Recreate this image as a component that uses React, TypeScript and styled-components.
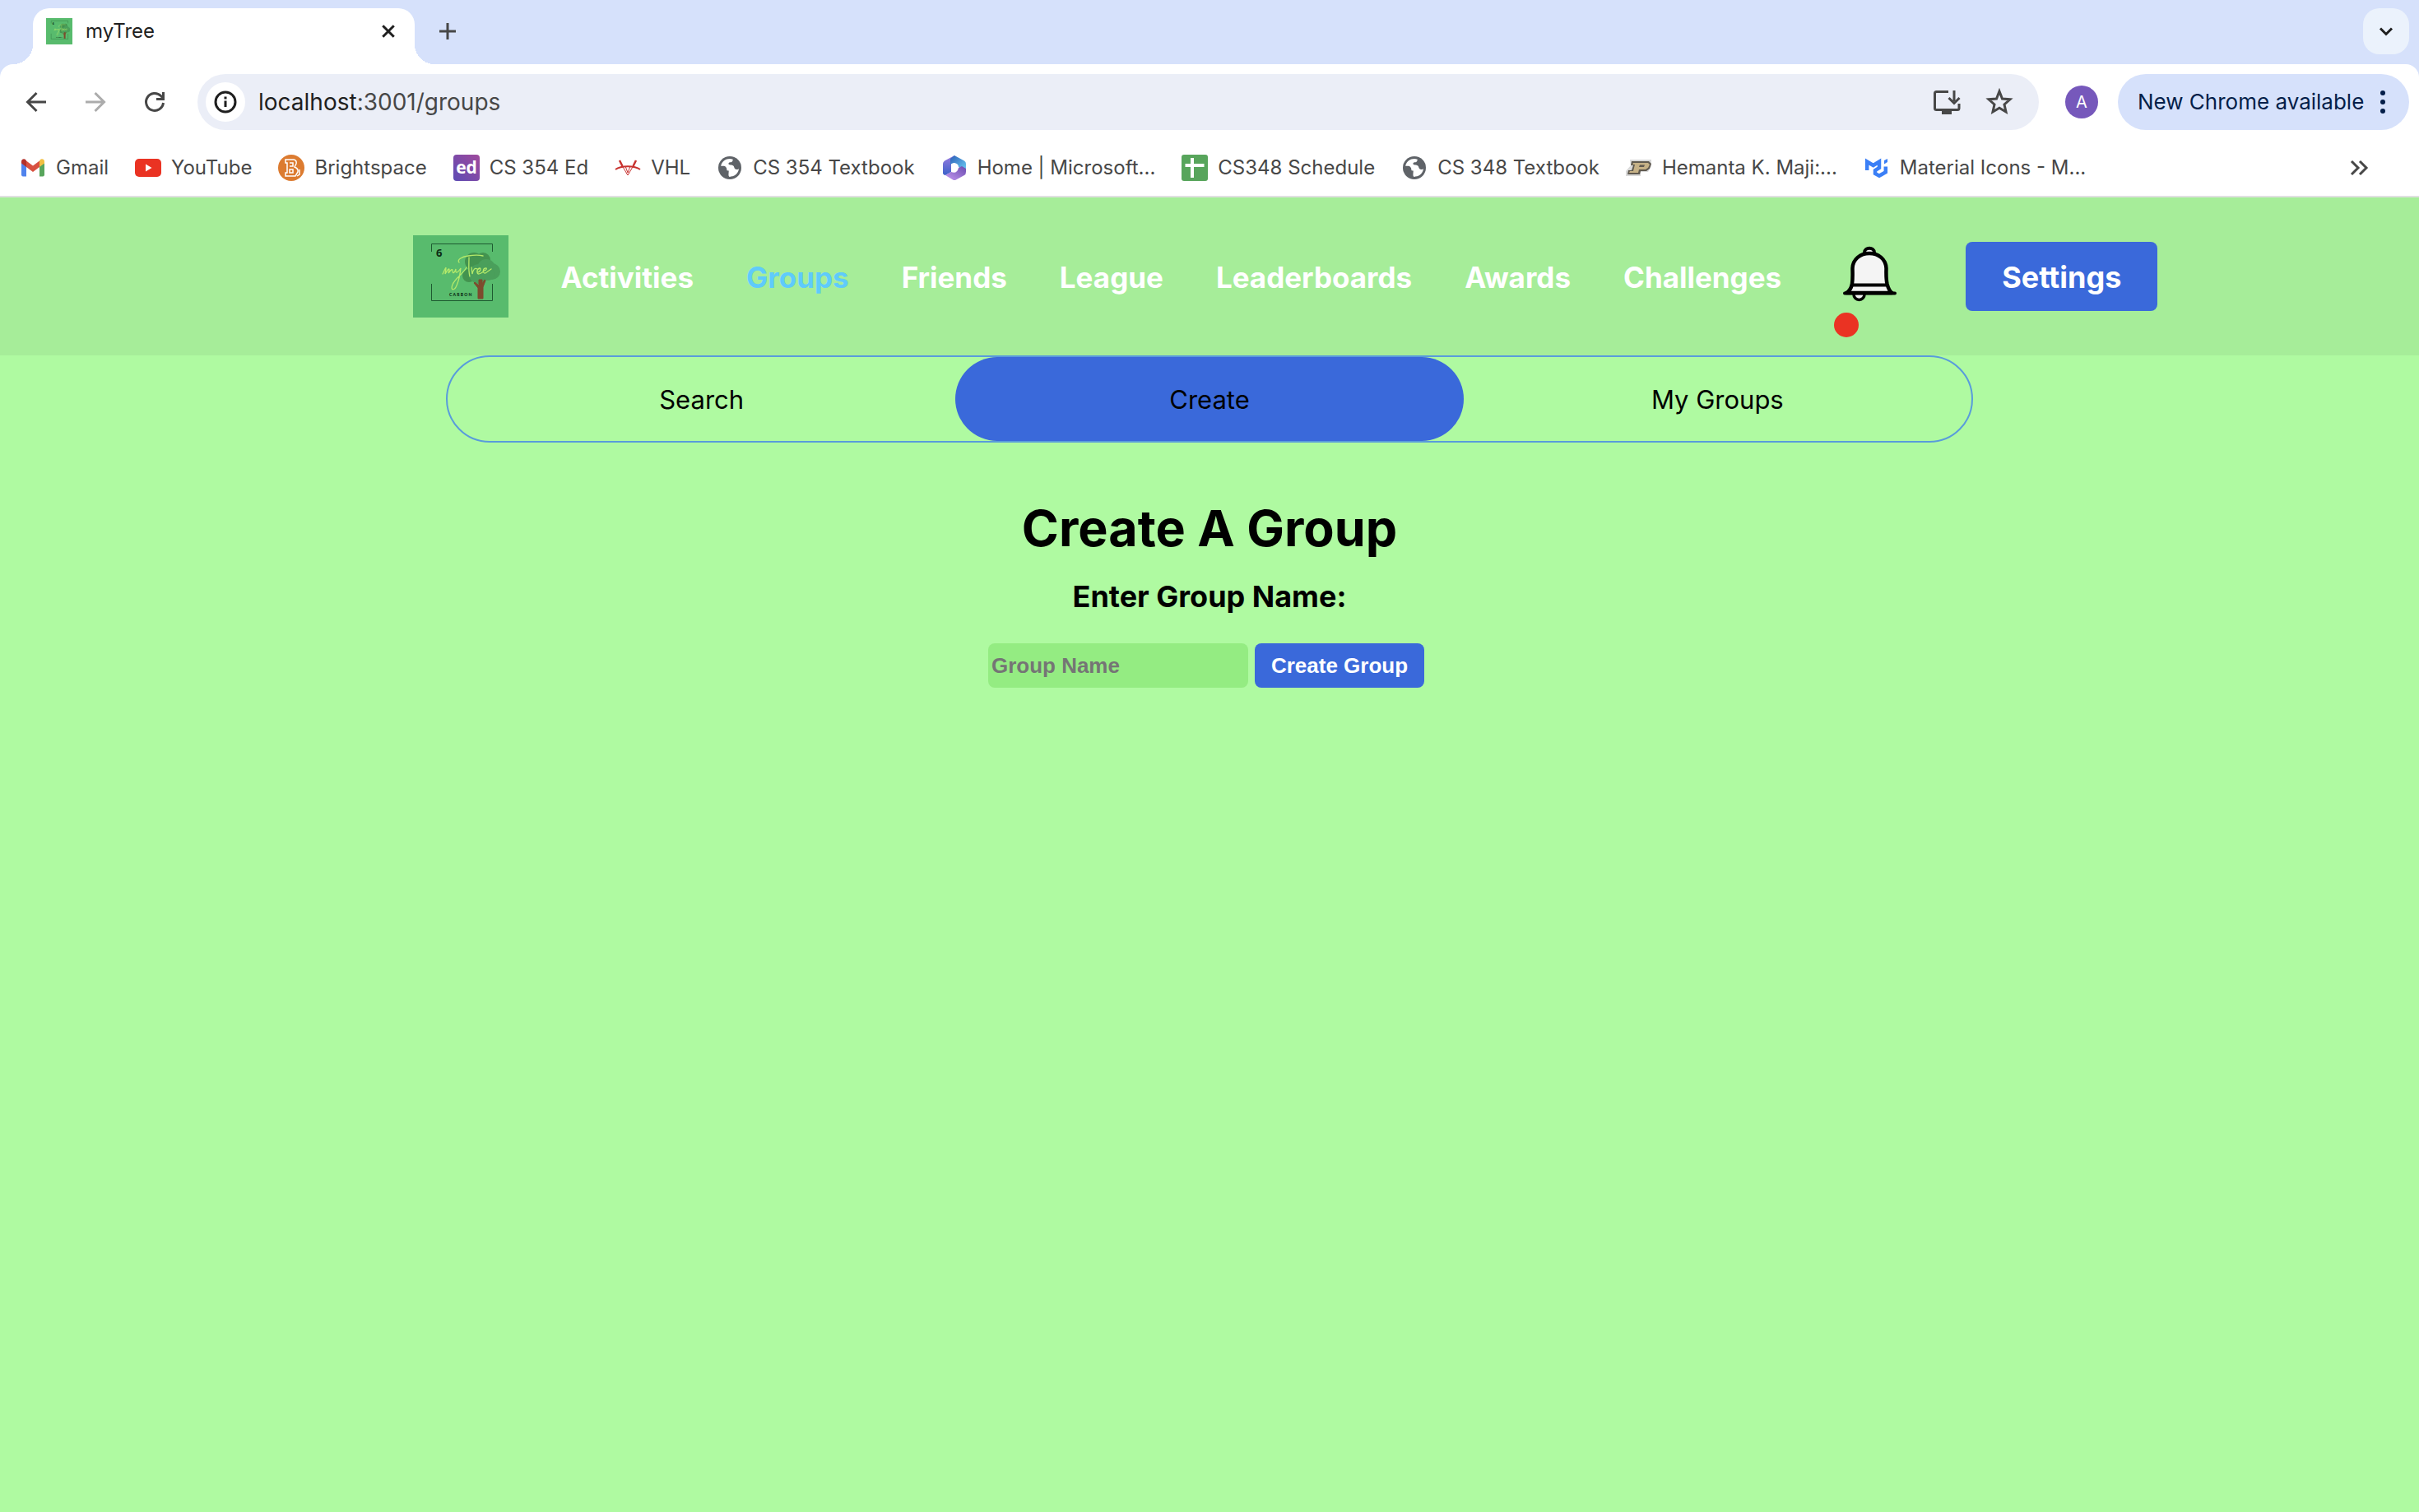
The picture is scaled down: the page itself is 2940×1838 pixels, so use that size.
import React from 'react';
import styled, { createGlobalStyle } from 'styled-components';

const GlobalStyle = createGlobalStyle`
  * { box-sizing: border-box; }
  body {
    margin: 0;
    background: #affaa1;
    font-family: Inter, 'Liberation Sans', sans-serif;
    color: #000;
  }
  button, input { font: inherit; border: 0; padding: 0; margin: 0; background: none; color: inherit; }
  a { color: inherit; text-decoration: none; }
  svg { display: block; flex: none; }
`;

/* ---------- browser frame ---------- */

const TabStrip = styled.div`
  display: flex;
  align-items: center;
  height: 78px;
  padding: 10px 12px 0 40px;
  background: #d6e1fb;
`;

const BrowserTab = styled.div`
  position: relative;
  display: flex;
  align-items: center;
  gap: 16px;
  width: 464px;
  height: 68px;
  padding: 0 20px 12px 16px;
  border-radius: 20px 20px 0 0;
  background: #fff;
  font-size: 24px;
  line-height: 32px;
  color: #1f1f1f;

  &::before,
  &::after {
    content: '';
    position: absolute;
    bottom: 0;
    width: 24px;
    height: 24px;
  }
  &::before {
    right: 100%;
    background: radial-gradient(circle at 0 0, transparent 24px, #fff 24px);
  }
  &::after {
    left: 100%;
    background: radial-gradient(circle at 100% 0, transparent 24px, #fff 24px);
  }
`;

const TabTitle = styled.span`
  flex: 1;
`;

const StripButton = styled.button`
  display: grid;
  place-items: center;
  width: 56px;
  height: 56px;
  margin: 0 0 12px 12px;
`;

const TabSearch = styled(StripButton)`
  margin-left: auto;
  border-radius: 20px;
  background: #ebf2fc;
`;

const ToolbarBack = styled.div`
  background: #d6e1fb;
`;

const Toolbar = styled.div`
  display: flex;
  align-items: center;
  height: 92px;
  padding: 0 12px 0 16px;
  border-radius: 16px 16px 0 0;
  background: #fff;
`;

const ToolButton = styled.button`
  display: grid;
  place-items: center;
  width: 56px;
  height: 56px;
  margin-right: 16px;
`;

const Omnibox = styled.div`
  display: flex;
  flex: 1;
  align-items: center;
  height: 68px;
  margin-left: 8px;
  padding: 0 30px 0 10px;
  border-radius: 34px;
  background: #ebeef7;
`;

const SiteInfo = styled.button`
  display: grid;
  place-items: center;
  width: 48px;
  height: 48px;
  margin-right: 16px;
  border-radius: 50%;
  background: #fff;
`;

const Address = styled.span`
  flex: 1;
  font-size: 28px;
  line-height: 36px;
  color: #474747;

  b { font-weight: 400; color: #1f1f1f; }
`;

const BoxActions = styled.div`
  display: flex;
  gap: 28px;
`;

const Avatar = styled.button`
  width: 40px;
  height: 40px;
  margin: 0 24px 0 32px;
  border-radius: 50%;
  background: #7658bb;
  color: #fff;
  font-size: 20px;
  line-height: 40px;
`;

const UpdateButton = styled.button`
  display: flex;
  align-items: center;
  justify-content: space-between;
  width: 354px;
  height: 68px;
  padding: 0 29px 0 24px;
  border-radius: 34px;
  background: #d6e1fb;
  color: #041e49;
  font-size: 26px;
  line-height: 32px;
  white-space: nowrap;
`;

const BookmarkBar = styled.nav`
  display: flex;
  align-items: center;
  height: 70px;
  padding: 0 56px 0 24px;
  border-bottom: 2px solid #e0e0e0;
  background: #fff;
`;

const Bookmark = styled.a`
  display: flex;
  align-items: center;
  gap: 12px;
  margin-right: 32px;
  font-size: 24px;
  line-height: 32px;
  color: #474747;
  white-space: nowrap;
`;

const MoreBookmarks = styled.button`
  margin-left: auto;
`;

/* ---------- myTree page ---------- */

const Header = styled.header`
  display: flex;
  align-items: center;
  justify-content: center;
  gap: 64px;
  height: 192px;
  padding-left: 184px;
  background: #a6ed99;
`;

const NavLink = styled.a<{ $active?: boolean }>`
  padding-top: 2px;
  font-size: 35px;
  line-height: 44px;
  font-weight: 700;
  color: ${(p) => (p.$active ? '#5fcbfb' : '#fff')};
`;

const Notifications = styled.button`
  display: flex;
  flex-direction: column;
  align-items: flex-start;
  gap: 8px;
  width: 96px;
  padding-top: 30px;
`;

const UnreadDot = styled.span`
  width: 30px;
  height: 30px;
  border-radius: 50%;
  background: #ea3323;
`;

const SettingsLink = styled.a`
  padding: 21px 44px 19px;
  border-radius: 8px;
  background: #3a69da;
  color: #fff;
  font-size: 36px;
  line-height: 44px;
  font-weight: 700;
`;

const Tabs = styled.div`
  display: flex;
  width: 100%;
  max-width: 1856px;
  height: 106px;
  margin: 0 auto;
  border: 2px solid #599cdb;
  border-radius: 53px;
`;

const Tab = styled.button<{ $active?: boolean }>`
  flex: 1;
  padding-top: 2px;
  border-radius: 51px;
  background: ${(p) => (p.$active ? '#3a69da' : 'transparent')};
  font-size: 31px;
  line-height: 40px;
`;

const CreateForm = styled.form`
  display: flex;
  flex-direction: column;
  align-items: center;
  padding-top: 64px;
`;

const Title = styled.h1`
  margin: 0;
  font-size: 61px;
  line-height: 80px;
  font-weight: 700;
`;

const FieldLabel = styled.label`
  margin: 21px 0 35px;
  font-size: 36px;
  line-height: 44px;
  font-weight: 700;
`;

const FieldRow = styled.div`
  display: flex;
  gap: 8px;
  padding-right: 8px;
  font-family: 'Liberation Sans', Arial, sans-serif;
  font-size: 26px;
  font-weight: 700;
`;

const GroupInput = styled.input`
  width: 316px;
  height: 54px;
  padding: 0 4px;
  border-radius: 8px;
  background: #94ec82;

  &::placeholder { color: #757575; opacity: 1; }
`;

const SubmitButton = styled.button`
  height: 54px;
  padding: 0 20px;
  border-radius: 8px;
  background: #3a69da;
  color: #fff;
`;

/* ---------- drawings ---------- */

const TreeLogo = ({ width, height }: { width: number; height: number }) => (
  <svg width={width} height={height} viewBox="0 0 116 100" preserveAspectRatio="none" aria-hidden="true">
    <rect width="116" height="100" fill="#58bb6d" />
    <g fill="#4a9f5b">
      <circle cx="74" cy="32" r="11" fill="#43934f" />
      <circle cx="85" cy="30" r="9" fill="#43934f" />
      <circle cx="68" cy="49" r="8" fill="#43934f" />
      <circle cx="80" cy="47" r="12" />
      <circle cx="89" cy="40" r="11" />
      <circle cx="96" cy="44" r="10" />
      <circle cx="91" cy="47" r="8" />
    </g>
    <path d="M79 77V64l-5-6 1-1 5 4v-7h4v5l3-5 1 1-3 8v14z" fill="#7d4b2d" stroke="#7d4b2d" />
    <path d="M22.500 20V10.500h74V20M22.500 59v20.500h74V59" fill="none" stroke="#1d5a30" strokeWidth="1" />
    <path
      d="M36 47c2-4 4-9 4-7l-1 7c3-5 5-8 5-5l-1 4c3-4 5-6 5-3 0 5 3 2 4-2-1 7 3 4 6-1-1 6-1 12-5 21-3 7-8 6-5-1 3-8 12-12 17-21M56 33c-3-3 3-7 11-8 7-1 14-1 18 0M68 27c0 8-1 16 1 23M71 39l1 8c1-5 3-8 6-6M78 45c4 0 5-5 3-5-4 1-4 7-1 7 3-1 5-2 6-4 4 0 4-4 2-3-4 1-3 7 0 6l7-5"
      fill="none" stroke="#b4e96a" strokeWidth="1.300" strokeLinecap="round"
    />
    <text x="28" y="26" fontFamily="Open Sans" fontWeight="700" fontSize="13" fill="#0b2a14">6</text>
    <text x="44" y="74" fontFamily="Lato" fontWeight="900" fontSize="5" letterSpacing="1.200" fill="#0b2a14">CARBON</text>
  </svg>
);

const BellIcon = () => (
  <svg width="92" height="79" viewBox="0 0 92 79" fill="none" stroke="#000" strokeWidth="4" aria-hidden="true">
    <path d="M24 65a6.500 6.500 0 0 0 13 0" fill="#f4f4f4" strokeWidth="3.500" />
    <path d="M37 14c0-7 12-7 12 0" fill="#f4f4f4" />
    <path d="M22 52c1-7 .5-14 .5-19C23 22 32 15 43 15s20 7 20.500 18c0 5-.5 12 1 19 1 4 3 9 6 11H15c4-2 6-6 7-11z" fill="#f4f4f4" strokeWidth="4.500" strokeLinejoin="round" />
    <path d="M22 53.500h43M13 63.500h61" strokeLinecap="round" />
  </svg>
);

const GlobeIcon = () => (
  <svg width="32" height="32" viewBox="0 0 32 32" aria-hidden="true">
    <circle cx="16" cy="16" r="14" fill="#5f6368" />
    <path d="M19 5.500c-6-2-13 2-14 9 3 0 5-1 7 2 1 3 0 3 3 3v4c0 3 1 4 3 3 6-1 9-6 9-10-3 2-5 1-6-2s-6-1-7-3c0-3 3-2 4-3s1-2 1-3z" fill="#fff" transform="rotate(4 16 16)" />
  </svg>
);

const GmailIcon = () => (
  <svg width="32" height="32" viewBox="0 0 32 32" aria-hidden="true">
    <path d="M2 10v14.500c0 1 .8 1.900 1.900 1.900H8V14z" fill="#5083ed" />
    <path d="M30 10v14.500c0 1-.8 1.900-1.900 1.900H24V14z" fill="#58a55c" />
    <path d="M8 7.500l8 6 8-6V15l-8 6-8-6z" fill="#d85140" />
    <path d="M2 8.500C2 5.500 5.200 4.500 7 6l1 1.200V15l-6-4.500z" fill="#b3302a" />
    <path d="M30 8.500C30 5.500 26.800 4.500 25 6l-1 1.200V15l6-4.500z" fill="#f2bf42" />
  </svg>
);

const YouTubeIcon = () => (
  <svg width="32" height="32" viewBox="0 0 32 32" aria-hidden="true">
    <rect x="0" y="5" width="32" height="22" rx="5" fill="#ea3323" />
    <path d="M13 11.500v9l7.500-4.500z" fill="#fff" />
  </svg>
);

const BrightspaceIcon = () => (
  <svg width="32" height="32" viewBox="0 0 32 32" aria-hidden="true">
    <circle cx="16" cy="16" r="16" fill="#dc7b30" />
    <path d="M9 6h10q4 1 3 5l-2 4q5 2 4 6l-3 5H9v-4h2V10H9zM14 10h4v4h-4M14 18h4v4h-4zM26 18v6l-3 2" fill="none" stroke="#fff" strokeWidth="1.500" />
  </svg>
);

const EdIcon = () => (
  <svg width="32" height="32" viewBox="0 0 32 32" aria-hidden="true">
    <defs>
      <linearGradient id="ed" x1="0" y1="1" x2="1" y2="0">
        <stop offset="0" stopColor="#5c4bb4" />
        <stop offset="1" stopColor="#a04a9c" />
      </linearGradient>
    </defs>
    <rect width="32" height="32" rx="4" fill="url(#ed)" />
    <text x="16" y="23" textAnchor="middle" fontFamily="Open Sans" fontWeight="700" fontSize="21" fill="#fff">ed</text>
  </svg>
);

const VhlIcon = () => (
  <svg width="32" height="32" viewBox="0 0 32 32" fill="none" stroke="#c8322f" aria-hidden="true">
    <path d="M1 18c7-5 23-5 30 0" strokeWidth="2" />
    <path d="M6 7l3.500 7M26 7l-3.500 7" strokeWidth="2.500" />
    <path d="M9.500 14L16 25l6.500-11M13 14l3 8 3-8" strokeWidth="1" />
  </svg>
);

const MicrosoftIcon = () => (
  <svg width="32" height="32" viewBox="0 0 32 32" aria-hidden="true">
    <defs>
      <linearGradient id="msA" x1="0" y1="0" x2="0" y2="1">
        <stop offset="0" stopColor="#9a7be0" />
        <stop offset="1" stopColor="#3b62c9" />
      </linearGradient>
      <linearGradient id="msB" x1="0" y1="0" x2="1" y2="1">
        <stop offset="0" stopColor="#2b5fb8" />
        <stop offset="1" stopColor="#6fd0f5" />
      </linearGradient>
      <linearGradient id="msC" x1="0" y1="1" x2="1" y2="0">
        <stop offset="0" stopColor="#c49af0" />
        <stop offset="1" stopColor="#6a4bb0" />
      </linearGradient>
    </defs>
    <path d="M16 1L4 7.500Q2 9 2 11v12q1 2 3 2l7-4V11l4-2z" fill="url(#msA)" />
    <path d="M16 1l12 6.500q2 1 2 3.500v9l-9-5q0-4-5-5-4 0-5 3V5z" fill="url(#msB)" />
    <path d="M30 17v4q0 3-2 4l-10 5.500q-2 1-4 0L5 25l7-4q7 3 9-5l4-2z" fill="url(#msC)" />
  </svg>
);

const SheetIcon = () => (
  <svg width="32" height="32" viewBox="0 0 32 32" aria-hidden="true">
    <rect width="32" height="32" rx="3" fill="#58a55c" />
    <path d="M13 4v24M4.500 13h23" stroke="#fff" strokeWidth="4" />
  </svg>
);

const PurdueIcon = () => (
  <svg width="32" height="32" viewBox="0 0 32 32" aria-hidden="true">
    <path d="M5 6h26v8l-4 7h-9v5H0v-6l6-7z" fill="#d9d9d9" />
    <path d="M7 8h21l3 3-2 6-4 3h-7l-1 4H2l1-5h4l2-6H6z" fill="#5f594f" />
    <path d="M9 10h18l2 2-2 4-3 2h-8l-1 4H4l1-2h4l2-8H8z" fill="#c6b186" />
    <path d="M17 12.500h6l-1 2.500h-6z" fill="#5f594f" />
  </svg>
);

const MuiIcon = () => (
  <svg width="32" height="32" viewBox="0 0 32 32" fill="none" stroke="#3b7ff6" strokeWidth="4.500" aria-hidden="true">
    <path d="M4.200 19V8.500l7.500 4.500 7.300-4.500v7.500l-5 3.200v3.800l5 2.700 7.800-4.500V14.500" />
    <path d="M25 7l4-2v4l-4 2.500z" fill="#3b7ff6" stroke="none" />
  </svg>
);

const bookmarks: [string, React.FC][] = [
  ['Gmail', GmailIcon],
  ['YouTube', YouTubeIcon],
  ['Brightspace', BrightspaceIcon],
  ['CS 354 Ed', EdIcon],
  ['VHL', VhlIcon],
  ['CS 354 Textbook', GlobeIcon],
  ['Home | Microsoft...', MicrosoftIcon],
  ['CS348 Schedule', SheetIcon],
  ['CS 348 Textbook', GlobeIcon],
  ['Hemanta K. Maji:...', PurdueIcon],
  ['Material Icons - M...', MuiIcon],
];

const links = ['Activities', 'Groups', 'Friends', 'League', 'Leaderboards', 'Awards', 'Challenges'];

const Stroke = ({ d, size = 32, color = '#474747', width = 3 }: { d: string; size?: number; color?: string; width?: number }) => (
  <svg width={size} height={size} viewBox="0 0 32 32" fill="none" stroke={color} strokeWidth={width} aria-hidden="true">
    <path d={d} />
  </svg>
);

export default function App() {
  return (
    <>
      <GlobalStyle />
      <TabStrip>
        <BrowserTab>
          <TreeLogo width={32} height={32} />
          <TabTitle>myTree</TabTitle>
          <button type="button" aria-label="Close tab">
            <Stroke size={24} color="#1f1f1f" width={4} d="M7 7l18 18M25 7L7 25" />
          </button>
        </BrowserTab>
        <StripButton type="button" aria-label="New tab">
          <Stroke d="M16 6v20M6 16h20" />
        </StripButton>
        <TabSearch type="button" aria-label="Search tabs">
          <Stroke color="#1f1f1f" d="M9 12.500l7 7 7-7" />
        </TabSearch>
      </TabStrip>
      <ToolbarBack>
        <Toolbar>
          <ToolButton type="button" aria-label="Back">
            <Stroke d="M28 16H6M16.500 5L5.500 16l11 11" />
          </ToolButton>
          <ToolButton type="button" aria-label="Forward" disabled>
            <Stroke color="#acacac" d="M4 16h22M15.500 5l11 11-11 11" />
          </ToolButton>
          <ToolButton type="button" aria-label="Reload">
            <Stroke d="M26.500 17A10.500 10.500 0 1 1 23.500 8.500L26 11M26.500 4v8.500H18" />
          </ToolButton>
          <Omnibox>
            <SiteInfo type="button" aria-label="View site information">
              <svg width="32" height="32" viewBox="0 0 32 32" fill="none" stroke="#1f1f1f" strokeWidth="3" aria-hidden="true">
                <circle cx="16" cy="16" r="12" />
                <path d="M16 14.500V22M16 9.500v3" />
              </svg>
            </SiteInfo>
            <Address><b>localhost</b>:3001/groups</Address>
            <BoxActions>
              <button type="button" aria-label="Install app">
                <svg width="36" height="36" viewBox="0 0 36 36" fill="none" stroke="#474747" strokeWidth="3" aria-hidden="true">
                  <path d="M20 5.500H5.500Q3.500 5.500 3.500 7.500v18Q3.500 27.500 5.500 27.500H31Q33 27.500 33 25.500V20M27 4v13M20.500 13l6.500 6.500 6.500-6.500" />
                  <path d="M12 30.500h12" strokeWidth="5" />
                </svg>
              </button>
              <button type="button" aria-label="Bookmark this tab">
                <svg width="36" height="36" viewBox="0 0 36 36" fill="none" stroke="#474747" strokeWidth="3" aria-hidden="true">
                  <path d="M18 5l3.500 9 9.500.8-7 6.200 2 9-8-4.800-8 4.800 2-9-7-6.200 9.500-.8z" />
                </svg>
              </button>
            </BoxActions>
          </Omnibox>
          <Avatar type="button">A</Avatar>
          <UpdateButton type="button">
            New Chrome available
            <svg width="6" height="28" viewBox="0 0 6 28" fill="#041e49" aria-hidden="true">
              <circle cx="3" cy="3" r="3" />
              <circle cx="3" cy="14" r="3" />
              <circle cx="3" cy="25" r="3" />
            </svg>
          </UpdateButton>
        </Toolbar>
      </ToolbarBack>
      <BookmarkBar>
        {bookmarks.map(([name, Icon]) => (
          <Bookmark href="#" key={name}>
            <Icon />
            {name}
          </Bookmark>
        ))}
        <MoreBookmarks type="button" aria-label="More bookmarks">
          <Stroke d="M6 8l8 8-8 8M16 8l8 8-8 8" />
        </MoreBookmarks>
      </BookmarkBar>

      <Header>
        <a href="#" aria-label="myTree"><TreeLogo width={116} height={100} /></a>
        {links.map((name) => (
          <NavLink href="#" key={name} $active={name === 'Groups'}>{name}</NavLink>
        ))}
        <Notifications type="button" aria-label="Notifications">
          <BellIcon />
          <UnreadDot />
        </Notifications>
        <SettingsLink href="#">Settings</SettingsLink>
      </Header>
      <main>
        <Tabs>
          <Tab type="button">Search</Tab>
          <Tab type="button" $active>Create</Tab>
          <Tab type="button">My Groups</Tab>
        </Tabs>
        <CreateForm>
          <Title>Create A Group</Title>
          <FieldLabel htmlFor="group-name">Enter Group Name:</FieldLabel>
          <FieldRow>
            <GroupInput id="group-name" placeholder="Group Name" />
            <SubmitButton type="button">Create Group</SubmitButton>
          </FieldRow>
        </CreateForm>
      </main>
    </>
  );
}
